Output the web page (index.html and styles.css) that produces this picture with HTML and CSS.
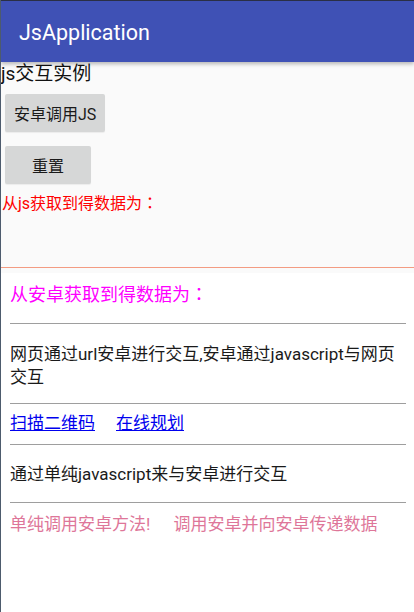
FILE: index.html
```html
<!DOCTYPE html>
<html lang="zh">
<head>
<meta charset="utf-8">
<title>JsApplication</title>
<link rel="stylesheet" href="styles.css">
</head>
<body>
<div class="screen">
  <header class="appbar"><span class="appbar-title">JsApplication</span></header>
  <section class="native">
    <div class="native-title">js交互实例</div>
    <button class="btn btn-first">安卓调用JS</button>
    <button class="btn btn-second">重置</button>
    <div class="native-result">从js获取到得数据为<span class="punct" lang="zh-TW">：</span></div>
  </section>
  <section class="webview">
    <div class="wv-result">从安卓获取到得数据为<span class="punct" lang="zh-TW">：</span></div>
    <div class="rule rule-1"></div>
    <p class="wv-text wv-text-1">网页通过url安卓进行交互,安卓通过javascript与网页交互</p>
    <div class="rule rule-2"></div>
    <div class="wv-links"><a class="link link-scan" href="#">扫描二维码</a><a class="link" href="#">在线规划</a></div>
    <div class="rule rule-3"></div>
    <p class="wv-text wv-text-2">通过单纯javascript来与安卓进行交互</p>
    <div class="rule rule-4"></div>
    <div class="wv-actions"><span class="action action-first">单纯调用安卓方法!</span><span class="action">调用安卓并向安卓传递数据</span></div>
  </section>
</div>
</body>
</html>
```
FILE: styles.css
```css
html, body {
  margin: 0;
  padding: 0;
  background: #ffffff;
}
.screen {
  width: 413px;
  height: 612px;
  border-left: 1px solid #4d5b6d;
  background: #fafafa;
  font-family: Roboto, "Noto Sans CJK SC", sans-serif;
  color: #212121;
  overflow: hidden;
  display: flex;
  flex-direction: column;
}
.appbar {
  height: 62px;
  flex: none;
  background: #3f51b5;
  box-shadow: 0 2px 4px rgba(0, 0, 0, 0.28), inset 0 1px 0 #2a2f45;
  display: flex;
  align-items: flex-start;
  position: relative;
  z-index: 1;
}
.appbar-title {
  color: #ffffff;
  font-size: 21.5px;
  line-height: 25px;
  margin: 20px 0 0 18px;
}
.native {
  height: 205px;
  flex: none;
  background: #fafafa;
  border-bottom: 1px solid #f39b82;
  display: flex;
  flex-direction: column;
  align-items: flex-start;
}
.native-title {
  font-size: 19px;
  line-height: 22px;
  margin-top: 1px;
  color: #111;
}
.btn {
  height: 38px;
  min-width: 86px;
  margin-left: 4px;
  padding: 0 9px;
  border: none;
  border-radius: 2px;
  background: #d6d7d7;
  font-family: Roboto, "Noto Sans CJK SC", sans-serif;
  font-size: 16px;
  color: #1a1a1a;
  box-shadow: 0 1px 1px rgba(0, 0, 0, 0.06);
}
.btn-first {
  margin-top: 9px;
}
.btn-second {
  margin-top: 14px;
}
.native-result {
  margin-top: 7px;
  margin-left: 1px;
  font-size: 16px;
  line-height: 22px;
  color: #ff0000;
}
.punct {
  font-family: "Noto Sans CJK TC", sans-serif;
}
.webview {
  flex: 1;
  margin-top: 5px;
  background: #ffffff;
  padding: 8px 8px 0 9px;
}
.wv-result {
  font-size: 18px;
  line-height: 24px;
  color: #ff00ff;
}
.rule {
  height: 1px;
  background: #9e9e9e;
}
.rule-1 { margin-top: 16px; }
.rule-2 { margin-top: 14px; }
.rule-3 { margin-top: 9px; }
.rule-4 { margin-top: 16px; }
.wv-text {
  margin: 0;
  font-size: 17px;
  line-height: 23px;
  color: #1a1a1a;
}
.wv-text-1 { margin-top: 19px; }
.wv-text-2 { margin-top: 18px; }
.wv-links {
  margin-top: 8px;
  font-size: 17px;
  line-height: 23px;
}
.link {
  color: #0000ee;
  text-decoration: underline;
}
.link-scan {
  margin-right: 21px;
}
.wv-actions {
  margin-top: 10px;
  font-size: 17px;
  line-height: 23px;
  color: #de7699;
}
.action-first {
  margin-right: 23px;
}
```
